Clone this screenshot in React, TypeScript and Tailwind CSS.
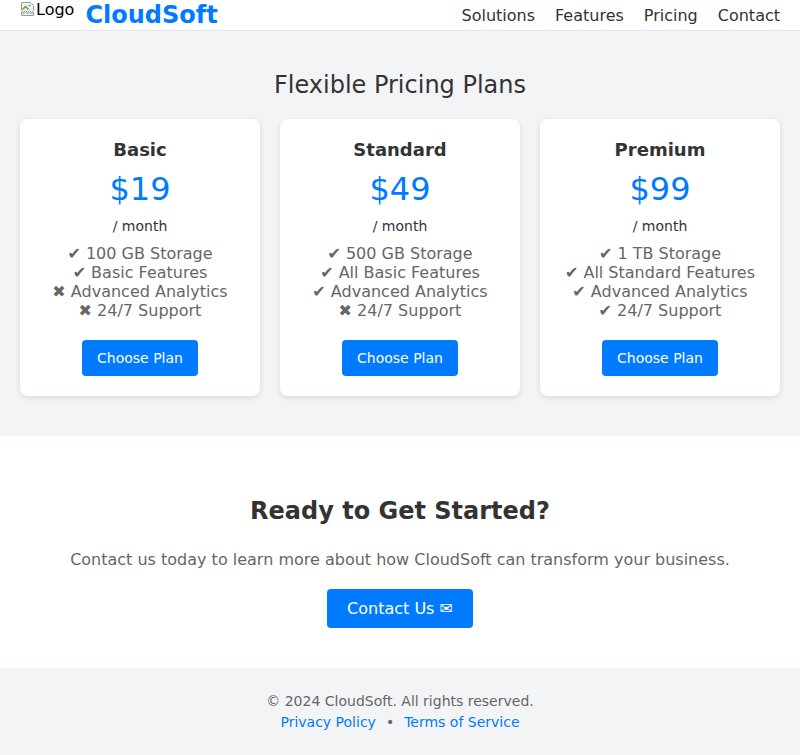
const plans = [
  {
    name: "Basic",
    price: "$19",
    features: ["✔ 100 GB Storage", "✔ Basic Features", "✖ Advanced Analytics", "✖ 24/7 Support"],
  },
  {
    name: "Standard",
    price: "$49",
    features: ["✔ 500 GB Storage", "✔ All Basic Features", "✔ Advanced Analytics", "✖ 24/7 Support"],
  },
  {
    name: "Premium",
    price: "$99",
    features: ["✔ 1 TB Storage", "✔ All Standard Features", "✔ Advanced Analytics", "✔ 24/7 Support"],
  },
];

function BrokenImage() {
  return (
    <svg width="16" height="16" viewBox="0 0 16 16" className="shrink-0">
      <path d="M1.5 1.5h9l3 3v5l-2 2-2-2-2 2-2-2-2 2-2-2z" fill="#f4f4f4" stroke="#9a9a9a" />
      <path d="M1.5 11l2 2 2-2 2 2 2-2 2 2 2-2v3.5h-12z" fill="#f4f4f4" stroke="#9a9a9a" />
      <path d="M2.5 8.5l3-3 3 3" fill="none" stroke="#5aa02c" strokeWidth="1.5" />
      <circle cx="9.5" cy="4.5" r="1" fill="#4a90d9" />
    </svg>
  );
}

export default function App() {
  return (
    <div className="min-h-screen bg-white text-[#333] font-['DejaVu_Sans',sans-serif]">
      {/* Header */}
      <header className="h-[31px] pt-[1px] flex items-center justify-between px-5 bg-white border-b border-[#e5e7eb]">
        <div className="flex items-center gap-[11px]">
          <div className="flex items-start h-[29px] text-[16px] leading-[18px] text-black">
            <BrokenImage />
            <span>Logo</span>
          </div>
          <span className="text-[24px] leading-[29px] font-bold text-[#007bff]">CloudSoft</span>
        </div>
        <nav className="flex items-center gap-5 text-[16px] leading-[29px] text-[#333]">
          <a href="#">Solutions</a>
          <a href="#">Features</a>
          <a href="#">Pricing</a>
          <a href="#">Contact</a>
        </nav>
      </header>

      {/* Pricing */}
      <section className="bg-[#f3f4f6] px-5 pt-[40px] pb-[40px]">
        <h1 className="text-center text-[24px] leading-[28px] mb-[20px]">Flexible Pricing Plans</h1>
        <div className="grid grid-cols-3 gap-5">
          {plans.map((p) => (
            <div
              key={p.name}
              className="bg-white rounded-lg shadow-[0_2px_6px_rgba(0,0,0,0.1)] p-5 flex flex-col items-center text-center"
            >
              <h3 className="text-[18px] leading-[21px] font-bold">{p.name}</h3>
              <div className="mt-[11px] text-[32px] leading-[37px] text-[#007bff]">{p.price}</div>
              <div className="mt-[10px] text-[14px] leading-[17px]">/ month</div>
              <ul className="mt-[9px] text-[16px] leading-[19px] text-[#666]">
                {p.features.map((f) => (
                  <li key={f}>{f}</li>
                ))}
              </ul>
              <button className="mt-5 h-[36px] px-[15px] rounded bg-[#007bff] text-white text-[14px]">
                Choose Plan
              </button>
            </div>
          ))}
        </div>
      </section>

      {/* CTA */}
      <section className="bg-white pt-[61px] pb-[40px] flex flex-col items-center text-center">
        <h2 className="text-[24px] leading-[28px] font-bold">Ready to Get Started?</h2>
        <p className="mt-[25px] text-[16px] leading-[19px] text-[#666]">
          Contact us today to learn more about how CloudSoft can transform your business.
        </p>
        <button className="mt-[20px] h-[39px] px-5 rounded bg-[#007bff] text-white text-[16px]">
          Contact Us ✉
        </button>
      </section>

      {/* Footer */}
      <footer className="bg-[#f3f4f6] pt-[23px] pb-[23px] text-center text-[14px] leading-[21px] text-[#666]">
        <p>© 2024 CloudSoft. All rights reserved.</p>
        <p>
          <a href="#" className="text-[#007bff]">Privacy Policy</a>
          <span className="mx-[10px]">•</span>
          <a href="#" className="text-[#007bff]">Terms of Service</a>
        </p>
      </footer>
    </div>
  );
}
